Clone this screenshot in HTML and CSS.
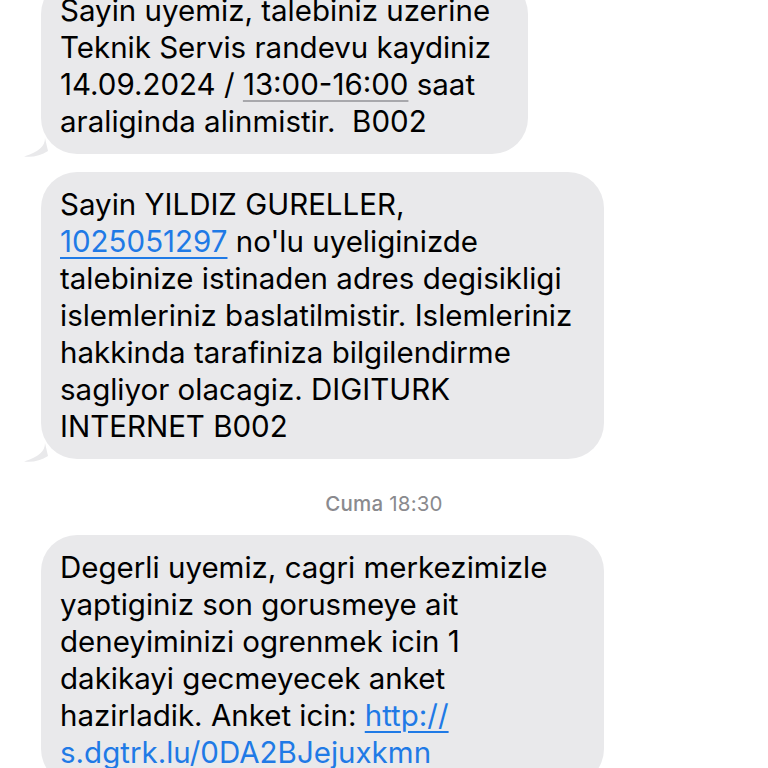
FILE: index.html
```html
<!DOCTYPE html>
<html lang="tr">
<head>
<meta charset="utf-8">
<link rel="stylesheet" href="styles.css">
</head>
<body>
<div class="thread">
  <div class="bubble b1">
    <p class="msg">Sayin uyemiz, talebiniz uzerine<br>Teknik Servis randevu kaydiniz<br>14.09.2024 / <span class="detect">13:00-16:00</span> saat<br>araliginda alinmistir.&nbsp; B002</p>
    <svg class="tail" viewBox="0 0 24 20" width="24" height="20"><path d="M21 0 C21 8 15 14 0 18.5 C9 19.5 17 17.5 24 13 Z" fill="#e9e9eb"/></svg>
  </div>
  <div class="bubble b2">
    <p class="msg">Sayin YILDIZ GURELLER,<br><span class="link">1025051297</span> no'lu uyeliginizde<br>talebinize istinaden adres degisikligi<br>islemleriniz baslatilmistir. Islemleriniz<br>hakkinda tarafiniza bilgilendirme<br>sagliyor olacagiz. DIGITURK<br>INTERNET B002</p>
    <svg class="tail" viewBox="0 0 24 20" width="24" height="20"><path d="M21 0 C21 8 15 14 0 18.5 C9 19.5 17 17.5 24 13 Z" fill="#e9e9eb"/></svg>
  </div>
  <div class="stamp"><span class="day">Cuma</span> 18:30</div>
  <div class="bubble b3">
    <p class="msg">Degerli uyemiz, cagri merkezimizle<br>yaptiginiz son gorusmeye ait<br>deneyiminizi ogrenmek icin 1<br>dakikayi gecmeyecek anket<br>hazirladik. Anket icin: <span class="link">http://</span><br><span class="link">s.dgtrk.lu/0DA2BJejuxkmn</span></p>
  </div>
</div>
</body>
</html>
```

FILE: styles.css
```css
html, body {
  margin: 0;
  padding: 0;
  background: #ffffff;
  overflow: hidden;
}
body {
  width: 768px;
  height: 768px;
  font-family: Inter, "Noto Sans", "Liberation Sans", sans-serif;
  color: #000000;
}
.thread {
  display: flex;
  flex-direction: column;
  align-items: flex-start;
  padding-left: 41px;
  margin-top: -22px;
}
.bubble {
  position: relative;
  background: #e9e9eb;
  border-radius: 36px;
  padding: 14px 18px 14px 19px;
  box-sizing: border-box;
}
.b1 { width: 487px; }
.b2 { width: 563px; margin-top: 18px; }
.b3 { width: 563px; }
.msg {
  margin: 0;
  font-size: 29.5px;
  line-height: 37px;
  letter-spacing: 0;
  white-space: nowrap;
}
.tail {
  position: absolute;
  left: -17px;
  bottom: -4px;
}
.detect {
  text-decoration: underline;
  text-decoration-color: #a8a8ac;
  text-decoration-thickness: 1.5px;
  text-underline-offset: 5px;
}
.link {
  color: #1f7ae6;
  text-decoration: underline;
  text-decoration-thickness: 2px;
  text-underline-offset: 5px;
}
.stamp {
  align-self: stretch;
  text-align: center;
  margin: 33px 0 19px -41px;
  font-size: 20.5px;
  line-height: 24px;
  color: #8a8a8e;
  letter-spacing: 0.2px;
}
.day {
  font-weight: 500;
}
```
